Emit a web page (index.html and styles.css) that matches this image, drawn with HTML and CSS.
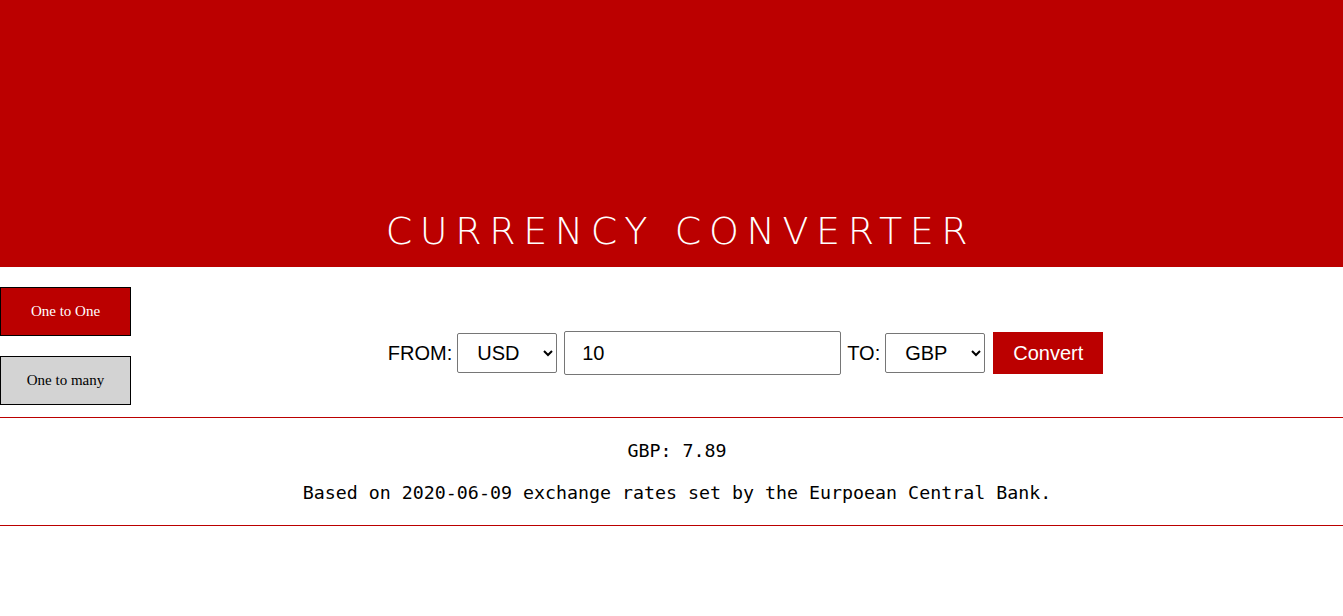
FILE: index.html
```html
<!DOCTYPE html>
<html>
<head>
<meta charset="utf-8">
<link rel="stylesheet" href="styles.css">
</head>
<body>
<header class="header">
  <h1 class="title">CURRENCY CONVERTER</h1>
</header>
<main class="main">
  <nav class="modes">
    <button class="mode mode-active">One to One</button>
    <button class="mode mode-idle">One to many</button>
  </nav>
  <div class="form-area">
    <form class="form">
      <label class="lbl">FROM:</label>
      <select class="sel"><option>USD</option></select>
      <input class="amount" type="text" value="10">
      <label class="lbl lbl-to">TO:</label>
      <select class="sel"><option>GBP</option></select>
      <button type="button" class="convert">Convert</button>
    </form>
  </div>
</main>
<section class="result">
  <p class="res-line">GBP: 7.89</p>
  <p class="res-note">Based on 2020-06-09 exchange rates set by the Eurpoean Central Bank.</p>
</section>
</body>
</html>
```
FILE: styles.css
```css
html, body {
  margin: 0;
  padding: 0;
  background: #fff;
}
.header {
  background: #bb0000;
  height: 267px;
  display: flex;
  align-items: flex-end;
  justify-content: center;
  padding-left: 18px;
  box-sizing: border-box;
}
.title {
  margin: 0 0 17px 0;
  color: #fff;
  font-family: "DejaVu Sans", sans-serif;
  font-weight: 200;
  font-size: 38px;
  letter-spacing: 7.6px;
  line-height: 1;
}
.main {
  display: flex;
  height: 150px;
  border-bottom: 1px solid #bb0000;
}
.modes {
  width: 131px;
  display: flex;
  flex-direction: column;
  padding-top: 20px;
  gap: 20px;
}
.mode {
  width: 131px;
  height: 49px;
  border: 1px solid #000;
  font-family: "Liberation Serif", serif;
  font-size: 15px;
  padding: 0;
  margin: 0;
}
.mode-active {
  background: #bb0000;
  color: #fff;
}
.mode-idle {
  background: #d3d3d3;
  color: #000;
}
.form-area {
  flex: 1;
  display: flex;
  justify-content: center;
  align-items: center;
  padding-left: 17px;
  padding-top: 22px;
}
.form {
  display: flex;
  align-items: center;
  margin: 0;
  font-family: "Liberation Sans", Arial, sans-serif;
  font-size: 20px;
  color: #000;
}
.lbl {
  margin-right: 5px;
}
.lbl-to {
  margin-left: 6px;
}
.sel {
  width: 100px;
  height: 40px;
  font-family: "Liberation Sans", Arial, sans-serif;
  font-size: 20px;
  border: 1px solid #767676;
  border-radius: 2px;
  background: #fff;
  color: #000;
  padding-left: 15px;
}
.amount {
  width: 277px;
  height: 44px;
  box-sizing: border-box;
  margin-left: 7px;
  border: 1px solid #767676;
  border-radius: 2px;
  font-family: "Liberation Sans", Arial, sans-serif;
  font-size: 20px;
  padding: 0 0 0 17px;
  color: #000;
}
.convert {
  margin-left: 8px;
  width: 110px;
  height: 42px;
  background: #bb0000;
  color: #fff;
  border: none;
  font-family: "Liberation Sans", Arial, sans-serif;
  font-size: 20px;
  padding: 0;
}
.result {
  border-bottom: 1px solid #bb0000;
  text-align: center;
  font-family: "DejaVu Sans Mono", monospace;
  font-size: 18.3px;
  color: #000;
  padding: 22px 0 21px 11px;
}
.res-line {
  margin: 0;
  line-height: 22px;
}
.res-note {
  margin: 20px 0 0;
  line-height: 22px;
}
```
